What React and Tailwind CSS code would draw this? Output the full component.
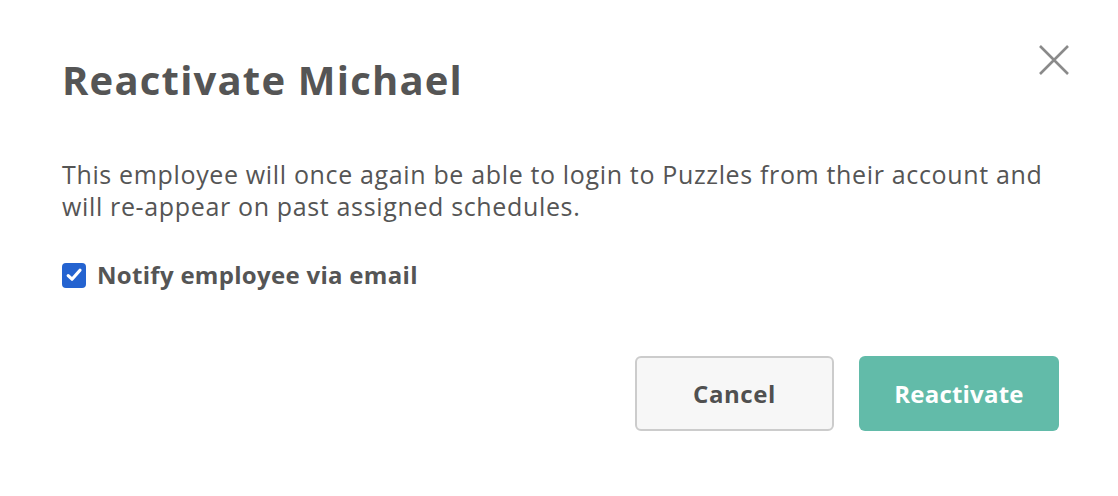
import React from "react";

export default function App() {
  return (
    <div
      className="w-[1118px] h-[496px] bg-white relative text-[#555555]"
      style={{ fontFamily: "'Open Sans', Lato, sans-serif" }}
    >
      <button className="absolute left-[1038px] top-[44px] w-[32px] h-[32px] flex items-center justify-center">
        <svg width="32" height="32" viewBox="0 0 32 32">
          <path d="M2 2 L30 30 M30 2 L2 30" stroke="#8a8a8a" strokeWidth="2.6" strokeLinecap="butt" />
        </svg>
      </button>
      <div className="pl-[62px] pr-[59px] pt-[56px] flex flex-col">
        <h1 className="text-[40px] leading-[48px] font-bold tracking-[1.2px] text-[#555555]">Reactivate Michael</h1>
        <p className="mt-[54px] text-[25px] leading-[32px] tracking-[0.65px] text-[#555555] whitespace-nowrap">
          This employee will once again be able to login to Puzzles from their account and
          <br />
          will re-appear on past assigned schedules.
        </p>
        <label className="mt-[37px] flex items-center gap-[11px]">
          <span className="w-[24px] h-[25px] rounded-[4px] bg-[#2463d0] flex items-center justify-center">
            <svg width="18" height="18" viewBox="0 0 18 18">
              <path d="M3.2 9.6 L7 13.2 L15 4.2" stroke="white" strokeWidth="3.2" fill="none" strokeLinecap="round" strokeLinejoin="round" />
            </svg>
          </span>
          <span className="text-[24px] leading-[32px] font-bold tracking-[0.3px]">Notify employee via email</span>
        </label>
        <div className="mt-[65px] flex justify-end gap-[25px]">
          <button className="w-[199px] h-[75px] rounded-[6px] border-2 border-[#cccccc] bg-[#f7f7f7] text-[24px] font-bold tracking-[0.6px] text-[#505050]">
            Cancel
          </button>
          <button className="w-[200px] h-[75px] rounded-[6px] bg-[#62bba9] text-[24px] font-bold tracking-[0.2px] text-white">
            Reactivate
          </button>
        </div>
      </div>
    </div>
  );
}
